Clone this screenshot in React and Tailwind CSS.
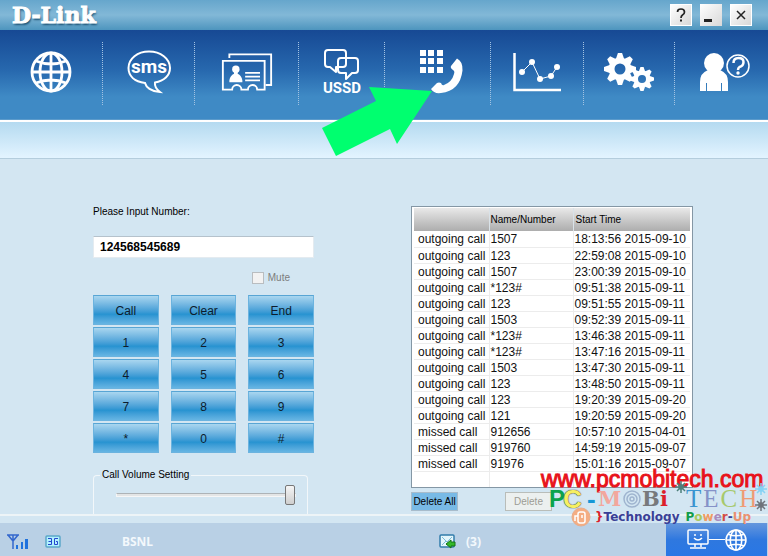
import React, { useState } from "react";

const keys = ["Call", "Clear", "End", "1", "2", "3", "4", "5", "6", "7", "8", "9", "*", "0", "#"];

const calls = [
  ["outgoing call", "1507", "18:13:56 2015-09-10"],
  ["outgoing call", "123", "22:59:08 2015-09-10"],
  ["outgoing call", "1507", "23:00:39 2015-09-10"],
  ["outgoing call", "*123#", "09:51:38 2015-09-11"],
  ["outgoing call", "123", "09:51:55 2015-09-11"],
  ["outgoing call", "1503", "09:52:39 2015-09-11"],
  ["outgoing call", "*123#", "13:46:38 2015-09-11"],
  ["outgoing call", "*123#", "13:47:16 2015-09-11"],
  ["outgoing call", "1503", "13:47:30 2015-09-11"],
  ["outgoing call", "123", "13:48:50 2015-09-11"],
  ["outgoing call", "123", "19:20:39 2015-09-20"],
  ["outgoing call", "121", "19:20:59 2015-09-20"],
  ["missed call", "912656", "10:57:10 2015-04-01"],
  ["missed call", "919760", "14:59:19 2015-09-07"],
  ["missed call", "91976", "15:01:16 2015-09-07"],
  ["", "", ""],
];

const GlobeIcon = ({ size, width }) => (
  <svg width={size} height={size} viewBox="0 0 42 42" fill="none" stroke="white" strokeWidth={width}>
    <circle cx="21" cy="21" r="19" />
    <ellipse cx="21" cy="21" rx="11" ry="19" />
    <path d="M21 2v38M2 21h38M6 10q15 6 30 0M6 32q15-6 30 0" />
  </svg>
);

const SmsIcon = () => (
  <svg width="44" height="44" viewBox="0 0 44 44">
    <path
      d="M22 1.500C10.500 1.500 1.500 8.500 1.500 18c0 8 6 13.500 16.500 15 1 4 6 8.500 15 9-4-3-5.500-6-5-9.500C37 31 43 25.500 43 18 43 8.500 33.500 1.500 22 1.500z"
      fill="none" stroke="white" strokeWidth="2"
    />
    <text x="22" y="23" textAnchor="middle" fill="white" className="font-['Roboto',sans-serif] text-[19px] font-bold">sms</text>
  </svg>
);

const CardIcon = () => (
  <svg width="52" height="40" viewBox="0 0 56 42" fill="none" stroke="white" strokeWidth="2">
    <path d="M9 6V2h45v33h-6" />
    <path d="M2 9h45v31h-8a5 5 0 0 0-10 0h-7a5 5 0 0 0-10 0H2z" />
    <circle cx="16" cy="18" r="4" fill="white" stroke="none" />
    <path d="M9 32v-2q1-5 5-7v-3h4v3q4 2 5 7v2z" fill="white" stroke="none" />
    <path d="M26 22h16M26 26h16M26 30h16" />
  </svg>
);

const UssdIcon = () => (
  <svg width="38" height="48" viewBox="0 0 38 48">
    <g fill="none" stroke="white" strokeWidth="2" strokeLinejoin="round">
      <path d="M5 2h15q3 0 3 3v11q0 3-3 3h-7v5l-6-5H5q-3 0-3-3V5q0-3 3-3z" />
      <path d="M18 10h14q3 0 3 3v9q0 3-3 3h-3l-6 6v-6h-5q-3 0-3-3v-9q0-3 3-3z" />
    </g>
    <text x="19" y="45" textAnchor="middle" fill="white" className="font-['Roboto',sans-serif] text-[15px] font-bold">USSD</text>
  </svg>
);

const PhoneIcon = () => (
  <svg width="54" height="46" viewBox="-8 0 54 46" fill="white">
    {[0, 8, 17].map((y) => [0, 8, 17].map((x) => <rect key={`${x}-${y}`} x={x + 1} y={y + 1} width="6" height="6" />))}
    <path d="M38 9.500q6 3 5.500 12Q41 42 22 44q-7 1-10-4l6-6q2-1 4 0 1 3 3 2 8-3 10-11 1-3-1-4-3-2-2-4z" />
  </svg>
);

const ChartIcon = () => (
  <svg width="50" height="42" viewBox="0 0 50 42" stroke="white">
    <path d="M2.500 2v37H49" fill="none" strokeWidth="2.500" />
    <path d="M10 21l10-10 8 17 11-3 6-9" fill="none" strokeWidth="1" />
    <g fill="white" stroke="none">
      <circle cx="10" cy="21" r="3" />
      <circle cx="20" cy="11" r="3" />
      <circle cx="28" cy="28" r="3" />
      <circle cx="39" cy="25" r="3" />
      <circle cx="45" cy="16" r="3" />
    </g>
  </svg>
);

const Gear = ({ cx, cy, r, hole }) => (
  <g transform={`translate(${cx} ${cy})`}>
    {[0, 45, 90, 135, 180, 225, 270, 315].map((a) => (
      <path key={a} transform={`rotate(${a})`} d={`M${-r * 0.27} ${-r * 0.6}L${-r * 0.13} ${-r}h${r * 0.26}L${r * 0.27} ${-r * 0.6}z`} fill="white" />
    ))}
    <circle r={(r * 0.7 + hole) / 2} fill="none" stroke="white" strokeWidth={r * 0.7 - hole} />
  </g>
);

const GearsIcon = () => (
  <svg width="52" height="40" viewBox="0 0 52 40">
    <Gear cx={17} cy={17} r={16} hole={5.5} />
    <Gear cx={39} cy={27} r={12} hole={4} />
  </svg>
);

const HelpIcon = () => (
  <svg width="56" height="42" viewBox="-4 0 56 42">
    <g fill="white">
      <circle cx="16" cy="12" r="10" />
      <path d="M10 19h12q8 3 8 12v9h-6v-8h-1v8H9v-8H8v8H2v-9q0-9 8-12z" />
    </g>
    <circle cx="40" cy="15" r="11" fill="none" stroke="white" strokeWidth="1.500" />
    <path d="M35.500 12q0-5 5-5t5 4-4 5q-1.500 1-1.500 3" fill="none" stroke="white" strokeWidth="2.500" />
    <circle cx="40" cy="22" r="1.700" fill="white" />
  </svg>
);

const tabs = [
  { name: "Internet", icon: <GlobeIcon size={42} width={2.8} /> },
  { name: "Messages", icon: <SmsIcon /> },
  { name: "Contacts", icon: <CardIcon /> },
  { name: "USSD", icon: <UssdIcon /> },
  { name: "Call", icon: <PhoneIcon /> },
  { name: "Statistics", icon: <ChartIcon /> },
  { name: "Settings", icon: <GearsIcon /> },
  { name: "Support", icon: <HelpIcon /> },
];

const TitleBar = () => (
  <header className="flex h-[30px] items-center bg-linear-to-b from-[#66a6cc] via-[#82b8d7] to-[#4d95be] pr-4 pl-3">
    <h1 className="flex-1 font-['DejaVu_Serif',serif] text-[22px] leading-[30px] font-bold text-white [-webkit-text-stroke:1px_white] [text-shadow:1px_2px_2px_#1c5273]">
      D-Link
    </h1>
    <div className="flex gap-2 text-[#222]">
      <button aria-label="Help" className="flex size-[22px] items-center justify-center border border-white bg-linear-to-br from-white to-[#d8d8d8]">
        <svg width="14" height="16" viewBox="0 0 14 16">
          <path d="M3.500 5q0-3 3.500-3t3.500 3q0 2-2 3Q7 9 7 11" fill="none" stroke="currentColor" strokeWidth="1.700" />
          <path d="M6 12.500h2v2H6z" fill="currentColor" />
        </svg>
      </button>
      <button aria-label="Minimize" className="flex size-[22px] items-end bg-linear-to-br from-white to-[#d8d8d8] p-1">
        <span className="h-[3px] w-2 bg-[#222]" />
      </button>
      <button aria-label="Close" className="flex size-[22px] items-center justify-center border border-white bg-linear-to-br from-white to-[#d8d8d8]">
        <svg width="10" height="10" viewBox="0 0 10 10" stroke="currentColor" strokeWidth="1.500">
          <path d="M1 1l8 8M9 1L1 9" />
        </svg>
      </button>
    </div>
  </header>
);

const NavBar = () => (
  <div className="relative">
    <nav className="grid h-[89px] grid-cols-[103fr_92fr_104fr_86fr_106fr_93fr_91fr_93fr] bg-linear-to-b from-[#174994] via-[#2768ae] via-45% to-[#3f8ac5] to-75% pt-3 pb-[14px]">
      {tabs.map((tab) => (
        <button key={tab.name} aria-label={tab.name} className="flex items-center justify-center border-r border-dotted border-[#a3c3e2] pb-1 last:border-0">
          {tab.icon}
        </button>
      ))}
    </nav>
    <div className="h-[3px] border-t border-[#5c9bcb] bg-white" />
    <div className="h-[37px] border-b border-[#b4cddd] bg-linear-to-b from-[#b4daf0] to-[#e3f4ff]" />
    <svg className="absolute top-[56px] left-[321px]" width="112" height="71" viewBox="0 0 112 71">
      <path d="M1 42L55 15 48 1l63 4-35 53-7-15-54 27z" fill="#00ff6f" />
    </svg>
  </div>
);

const Dialer = () => {
  const [number, setNumber] = useState("124568545689");

  const handleKey = (key) => {
    if (key === "Clear") setNumber("");
    else if (key.length === 1) setNumber(number + key);
  };

  return (
    <section className="flex flex-col">
      <label htmlFor="number" className="text-[10px] leading-3">Please Input Number:</label>
      <input
        id="number"
        value={number}
        onChange={(e) => setNumber(e.target.value)}
        className="mt-[18px] h-[22px] w-full border border-[#e4ebf0] border-t-[#b5c2cc] bg-white px-1.5 text-[12px] font-bold"
      />
      <label className="mt-[14px] mr-6 flex items-center gap-1 self-end text-[10px] leading-3 text-[#7d7d7d]">
        <input type="checkbox" disabled className="size-3 appearance-none border border-[#b9bdc0] bg-[#f2f2f2]" />
        Mute
      </label>
      <div className="mt-[11px] grid grid-cols-3 gap-x-3 gap-y-0.5">
        {keys.map((key) => (
          <button
            key={key}
            onClick={() => handleKey(key)}
            className="h-[30px] border border-[#6bb3df] border-t-[#58a5d4] bg-linear-to-b from-[#a9d6ef] via-[#2793d1] via-65% to-[#66b5e3] pt-0.5 text-[12px] text-[#0d1c2c]"
          >
            {key}
          </button>
        ))}
      </div>
      <fieldset className="mt-4 h-[45px] w-[215px] rounded-t border border-b-0 border-[#f2f7fa] pr-[11px] pl-[22px]">
        <legend className="-ml-4 px-0.5 text-[10px] leading-3">Call Volume Setting</legend>
        <input
          type="range"
          defaultValue="100"
          aria-label="Call Volume Setting"
          className="mt-1 block h-5 w-full appearance-none bg-transparent [&::-webkit-slider-runnable-track]:h-1 [&::-webkit-slider-runnable-track]:border [&::-webkit-slider-runnable-track]:border-[#f6f6f6] [&::-webkit-slider-runnable-track]:border-t-[#adb3b7] [&::-webkit-slider-runnable-track]:bg-[#e3e5e6] [&::-webkit-slider-thumb]:-mt-[9px] [&::-webkit-slider-thumb]:h-5 [&::-webkit-slider-thumb]:w-[10px] [&::-webkit-slider-thumb]:appearance-none [&::-webkit-slider-thumb]:rounded-xs [&::-webkit-slider-thumb]:border [&::-webkit-slider-thumb]:border-[#777] [&::-webkit-slider-thumb]:bg-linear-to-b [&::-webkit-slider-thumb]:from-[#f5f5f5] [&::-webkit-slider-thumb]:to-[#cfcfcf]"
        />
      </fieldset>
    </section>
  );
};

const CallLog = () => (
  <section>
    <div className="border border-[#8497a5] bg-white px-0.5 pt-px">
      <table className="w-full table-fixed border-collapse text-left whitespace-nowrap">
        <thead>
          <tr className="h-[23px] bg-linear-to-b from-[#e9e9e9] to-[#adadad] text-[10px]">
            <th className="w-[75px] border-r border-[#d9e2e8]" />
            <th className="w-[84px] border-r border-[#d9e2e8] pl-px font-normal">Name/Number</th>
            <th className="pl-0.5 font-normal">Start Time</th>
          </tr>
        </thead>
        <tbody className="text-[12px] leading-[14px] text-[#111]">
          {calls.map(([type, number, time], i) => (
            <tr key={i} className="h-4 border-b border-[#ececec] last:border-0">
              <td className="border-r border-[#ececec] pt-px pl-1">{type}</td>
              <td className="border-r border-[#ececec] pt-px pl-px">{number}</td>
              <td className="pt-px pl-px">{time}</td>
            </tr>
          ))}
        </tbody>
      </table>
    </div>
    <div className="mt-1 flex gap-[47px] text-[10px]">
      <button className="h-[19px] w-[47px] border border-[#a8bccb] bg-[#78bae6] whitespace-nowrap">Delete All</button>
      <button disabled className="h-[19px] w-[47px] border border-[#b9bdb9] bg-[#ecf0ef] text-[#9c9c94]">Delete</button>
    </div>
  </section>
);

const Splat = ({ className, color }) => (
  <svg className={className} width="12" height="12" viewBox="0 0 12 12" stroke={color} strokeWidth="1.500">
    <path d="M6 0v12M0 6h12M2 2l8 8M10 2l-8 8" />
    <circle cx="6" cy="6" r="2" fill={color} />
  </svg>
);

const Watermark = () => (
  <div className="pointer-events-none absolute right-0 bottom-[31px] w-[227px]">
    <p className="text-[23px] leading-4 whitespace-nowrap text-[#e8121a] [-webkit-text-stroke:1px_#e8121a]">www.pcmobitech.com</p>
    <div className="relative flex h-6 items-center pl-2 leading-5 font-bold">
      <span className="w-[14px] text-[24px] text-[#0ba34c]">P</span>
      <span className="w-[24px] text-[26px] text-[#f6ef62] [text-shadow:0_0_1px_#333,0_0_1px_#333]">C</span>
      <span className="w-[11px] text-[26px] text-[#1497d6]">-</span>
      <span className="w-[24px] font-['DejaVu_Serif',serif] text-[21px] text-[#f2a79d]">M</span>
      <svg width="20" height="20" viewBox="0 0 20 20" fill="none" stroke="#9fb4cf" strokeWidth="1.500">
        <circle cx="10" cy="10" r="8" />
        <circle cx="10" cy="10" r="5" />
        <circle cx="10" cy="10" r="2" />
      </svg>
      <span className="w-[18px] font-['DejaVu_Serif',serif] text-[21px] text-[#77797c]">B</span>
      <span className="w-[26px] font-['DejaVu_Serif',serif] text-[21px] text-[#dc1f2b]">i</span>
      <span className="flex gap-0.5 font-['Liberation_Serif',serif] text-[25px] font-normal">
        <span className="text-[#3a94d0]">T</span>
        <span className="text-[#8592c8]">E</span>
        <span className="text-[#a7c96c]">C</span>
        <span className="text-[#ef9b76]">H</span>
      </span>
      <Splat className="absolute top-[-6px] left-[134px]" color="#4e807b" />
      <Splat className="absolute -top-1 right-px" color="#85d2f5" />
      <Splat className="absolute top-[12px] right-px" color="#6f747c" />
    </div>
    <div className="relative flex h-[14px] items-center gap-1.5 pb-0.5 pl-[54px] font-['DejaVu_Sans',sans-serif] text-[12px] leading-3 font-bold text-[#3a3f96]">
      <svg className="absolute -top-1 left-[30px]" width="20" height="20" viewBox="0 0 20 20">
        <circle cx="10" cy="10" r="9" fill="#f4ad83" stroke="#e8ad8c" />
        <rect x="7" y="5" width="7" height="11" rx="2" fill="none" stroke="white" strokeWidth="1.500" />
        <path d="M7 9H4v5M11 8v3" stroke="white" strokeWidth="1.500" fill="none" />
      </svg>
      <span className="-mr-1.5 text-[#dc1f2b]">}</span>
      <span>Technology</span>
      <span>
        <span className="text-[#139c4b]">P</span>
        <span className="text-[#a9c961]">o</span>
        <span className="text-[#ef9b62]">w</span>
        <span className="text-[#a98bbd]">e</span>
        <span className="text-[#d34c43]">r</span>
        <span className="text-[#3a3f96]">-</span>
        <span className="text-[#e99070]">Up</span>
      </span>
    </div>
  </div>
);

const StatusBar = () => (
  <footer className="flex h-[33px] bg-[#b9d0e5] font-['Noto_Sans',sans-serif] text-[12px] font-bold text-[#f3f8fc]">
    <div className="flex flex-1 items-center pt-1 pl-[7px]">
      <svg width="22" height="17" viewBox="0 0 22 17">
        <path d="M0 2h12M6 2v14M1 2l5 6 5-6" fill="none" stroke="#3367cd" strokeWidth="1.500" />
        <path d="M9 12h2v4H9zM14 9h2v7h-2zM18 6h3v10h-3z" fill="#1f72dd" />
      </svg>
      <svg className="ml-4" width="16" height="13" viewBox="0 0 16 13">
        <rect x="1" y="1" width="14" height="11" rx="1" fill="#b2f1ff" stroke="#5ca7c9" strokeWidth="1.500" />
        <path d="M3 3.500h3.500v6H3M3.500 6.500h3M13 3.500H9.500v6h3v-3H11" fill="none" stroke="#2547cf" />
      </svg>
      <span className="ml-[61px] flex-1">BSNL</span>
      <svg width="17" height="15" viewBox="0 0 17 15">
        <rect x="1" y="1" width="14" height="12" rx="1" fill="#e4f6fb" stroke="#327cab" strokeWidth="1.500" />
        <path d="M3 3l5 5 5-5M3 11l4-4" fill="none" stroke="#7cbcd8" />
        <path d="M7 10l5-4v2h4v4h-4v2z" fill="#31b827" stroke="#167019" strokeWidth="1" />
      </svg>
      <span className="ml-[10px] w-[200px]">(3)</span>
    </div>
    <div className="mr-px flex w-[101px] items-center justify-center bg-linear-to-b from-[#6497dd] via-[#2f78df] via-50% to-[#2877e5]">
      <svg width="22" height="21" viewBox="0 0 22 21" fill="none" stroke="white" strokeWidth="1.500">
        <rect x="1" y="1" width="20" height="14" rx="1" />
        <path d="M8 5v2M14 5v2M7 9q4 4 8 0M8 15v3M14 15v3M3 19h16" />
      </svg>
      <span className="h-px w-4 bg-white" />
      <GlobeIcon size={22} width={3} />
    </div>
  </footer>
);

export default function App() {
  return (
    <div className="relative flex min-h-screen flex-col bg-[#d3e6f2] font-['Liberation_Sans',Arial,sans-serif] text-black">
      <TitleBar />
      <NavBar />
      <main className="grid flex-1 grid-cols-[221px_282px] justify-between border-b-2 border-[#edf4f7] pt-[47px] pr-[75px] pl-[93px]">
        <Dialer />
        <CallLog />
      </main>
      <div className="h-[7px]" />
      <StatusBar />
      <Watermark />
    </div>
  );
}
